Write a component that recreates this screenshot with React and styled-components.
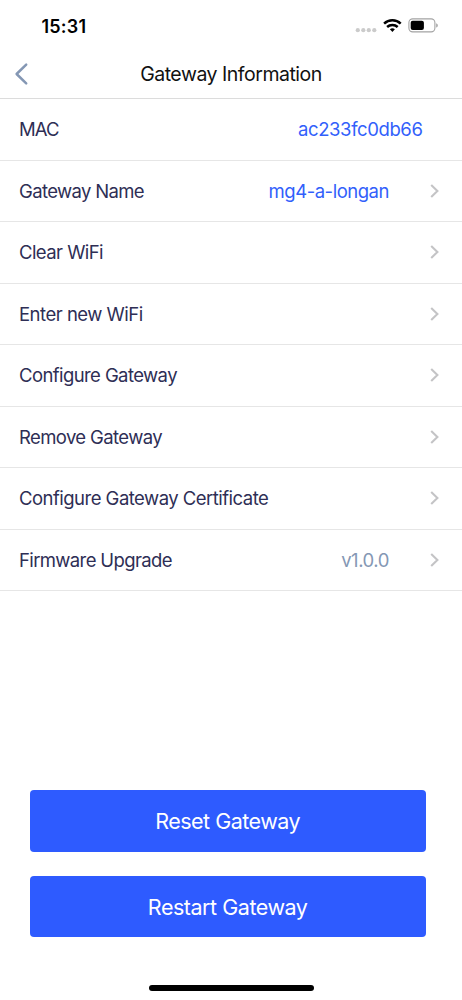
import React from "react";
import styled, { createGlobalStyle } from "styled-components";

const GlobalStyle = createGlobalStyle`
  *, *::before, *::after { box-sizing: border-box; }
  body { margin: 0; background: #fff; }
`;

const Screen = styled.main`
  display: flex;
  flex-direction: column;
  width: 462px;
  height: 1000px;
  overflow: hidden;
  background: #fff;
  font-family: Inter, "Liberation Sans", sans-serif;
  font-feature-settings: "calt" 0;
`;

const StatusBar = styled.div`
  display: flex;
  align-items: center;
  justify-content: space-between;
  height: 50px;
  padding: 1px 24px 0 41.5px;
`;

const Clock = styled.span`
  padding-top: 1px;
  font-size: 18px;
  font-weight: 600;
  letter-spacing: 0.2px;
  color: #000;
`;

const StatusIcons = styled.div`
  display: flex;
  align-items: center;
`;

const NavBar = styled.header`
  display: grid;
  grid-template-columns: 42px 1fr 42px;
  align-items: center;
  height: 49px;
  padding-bottom: 1px;
  border-bottom: 1px solid #dcdcdc;
`;

const BackButton = styled.button`
  display: flex;
  padding: 0 0 0 14px;
  border: 0;
  background: none;
`;

const Title = styled.h1`
  margin: 0;
  font-size: 19.5px;
  font-weight: 400;
  line-height: 24px;
  letter-spacing: ${(p) => p.$tracking}px;
  text-align: center;
  color: #111;
`;

const List = styled.ul`
  margin: 0;
  padding: 0;
  list-style: none;
`;

const Row = styled.li`
  display: flex;
  align-items: center;
  height: 61.53px;
  padding: 0 22px 0 19px;
  border-bottom: 1px solid #e6e6e6;
`;

const Label = styled.span`
  flex: 1;
  font-size: 18.5px;
  line-height: 24px;
  letter-spacing: ${(p) => p.$tracking}px;
  color: #2e2e55;
`;

const Value = styled.span`
  margin-right: ${(p) => (p.$last ? 17.5 : 41)}px;
  font-size: 18.5px;
  line-height: 24px;
  letter-spacing: ${(p) => p.$tracking}px;
  color: ${(p) => (p.$muted ? "#8497b4" : "#325ffb")};
`;

const Actions = styled.div`
  display: flex;
  flex-direction: column;
  gap: 24px;
  margin-top: auto;
  padding: 0 36.3px 0 29.6px;
`;

const ActionButton = styled.button`
  height: 61.5px;
  padding: 0.6px 0 0;
  border: 0;
  border-radius: 4px;
  background: #2e5bff;
  color: #fff;
  font-family: inherit;
  font-size: 21.5px;
  line-height: 26px;
  letter-spacing: ${(p) => p.$tracking}px;
`;

const HomeIndicator = styled.div`
  flex: none;
  width: 165px;
  height: 5.5px;
  margin: 48px auto 9.5px 148.5px;
  border-radius: 3px;
  background: #000;
`;

const rows = [
  { label: "MAC", tracking: -0.9, value: "ac233fc0db66", valueTracking: -0.4 },
  { label: "Gateway Name", tracking: -0.64, value: "mg4-a-longan", valueTracking: -0.47, link: true },
  { label: "Clear WiFi", tracking: -0.56, link: true },
  { label: "Enter new WiFi", tracking: -0.5, link: true },
  { label: "Configure Gateway", tracking: -0.59, link: true },
  { label: "Remove Gateway", tracking: -0.61, link: true },
  { label: "Configure Gateway Certificate", tracking: -0.52, link: true },
  { label: "Firmware Upgrade", tracking: -0.63, value: "v1.0.0", valueTracking: -0.45, muted: true, link: true },
];

function BackIcon() {
  return (
    <svg width="15" height="24" viewBox="0 0 15 24" fill="none">
      <path d="M12.2 2.6 2.6 12 12.2 21.4" stroke="#8497b4" strokeWidth="2.5" strokeLinecap="round" strokeLinejoin="round" />
    </svg>
  );
}

function Chevron() {
  return (
    <svg width="10" height="14" viewBox="0 0 10 14" fill="none">
      <path d="M1.2 1 7.4 7 1.2 13" stroke="#c4c4c6" strokeWidth="2.1" />
    </svg>
  );
}

function Signal() {
  return (
    <svg width="22" height="18" viewBox="0 0 22 18" fill="#cbcbcb">
      <circle cx="2.8" cy="13.2" r="2.1" />
      <circle cx="8.3" cy="13.2" r="2.1" />
      <circle cx="13.8" cy="13.2" r="2.1" />
      <circle cx="19.3" cy="13.2" r="2.1" />
    </svg>
  );
}

function Wifi() {
  return (
    <svg width="30" height="18" viewBox="0 0 30 18" fill="none" stroke="#000" strokeWidth="2.5">
      <path d="M7.1 6.6a12 12 0 0 1 16.6 0" />
      <path d="M10.1 10a7.8 7.8 0 0 1 10.6 0" />
      <path d="M12.9 12.2a3.9 3.9 0 0 1 5 0L15.4 15Z" fill="#000" stroke="none" />
    </svg>
  );
}

function Battery() {
  return (
    <svg width="31" height="18" viewBox="0 0 31 18" fill="none">
      <rect x="1.9" y="1.9" width="26" height="13" rx="3.8" stroke="#a3a3a3" strokeWidth="1.1" />
      <rect x="3.7" y="3.8" width="13.2" height="9.2" rx="2" fill="#000" />
      <path d="M29.2 6.3c1.2.6 1.6 1.3 1.6 2.1s-.4 1.5-1.6 2.1Z" fill="#a3a3a3" />
    </svg>
  );
}

export default function App() {
  return (
    <Screen>
      <GlobalStyle />
      <StatusBar>
        <Clock>15:31</Clock>
        <StatusIcons>
          <Signal />
          <Wifi />
          <Battery />
        </StatusIcons>
      </StatusBar>
      <NavBar>
        <BackButton aria-label="Back">
          <BackIcon />
        </BackButton>
        <Title $tracking={-0.48}>Gateway Information</Title>
      </NavBar>
      <List>
        {rows.map((row) => (
          <Row key={row.label}>
            <Label $tracking={row.tracking}>{row.label}</Label>
            {row.value && (
              <Value $tracking={row.valueTracking} $muted={row.muted} $last={!row.link}>
                {row.value}
              </Value>
            )}
            {row.link && <Chevron />}
          </Row>
        ))}
      </List>
      <Actions>
        <ActionButton $tracking={-0.5}>Reset Gateway</ActionButton>
        <ActionButton $tracking={-0.47}>Restart Gateway</ActionButton>
      </Actions>
      <HomeIndicator />
    </Screen>
  );
}
